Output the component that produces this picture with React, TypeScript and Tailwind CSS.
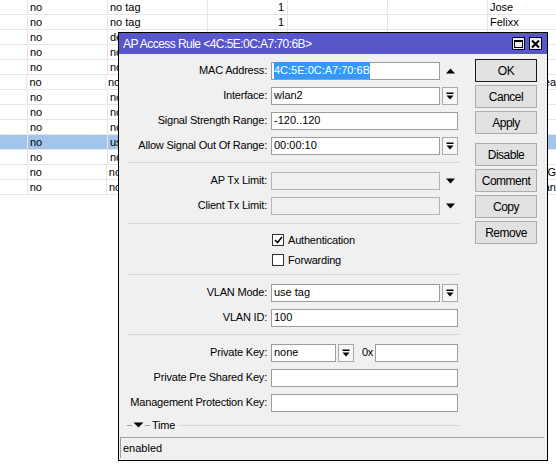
import React from "react";

const tableRows = [
  { c3: "no tag", c4: "1", c7: "Jose" },
  { c3: "no tag", c4: "1", c7: "Felixx" },
  { c3: "default", c4: "", c7: "" },
  { c3: "no tag", c4: "", c7: "" },
  { c3: "no tag", c4: "", c7: "" },
  { c3: "no tag", c4: "", c7: "Reception Area" },
  { c3: "no tag", c4: "", c7: "" },
  { c3: "no tag", c4: "", c7: "" },
  { c3: "no tag", c4: "", c7: "" },
  { c3: "use tag", c4: "", c7: "", selected: true },
  { c3: "no tag", c4: "", c7: "" },
  { c3: "no tag", c4: "", c7: "Conference IG" },
  { c3: "no tag", c4: "", c7: "Reception Lan" },
];

function Table() {
  return (
    <div className="flex flex-col">
      {tableRows.map((r, i) => (
        <div
          key={i}
          className={
            "flex h-[15px] border-b border-[#e6e6e6] leading-[14px] whitespace-nowrap " +
            (r.selected ? "bg-[#a3c5ec]" : "")
          }
        >
          <div className="w-[28px] border-r border-[#e6e6e6]" />
          <div className="w-[80px] border-r border-[#e6e6e6] pl-[2px]">no</div>
          <div className="w-[100px] border-r border-[#e6e6e6] pl-[2px]">{r.c3}</div>
          <div className="w-[80px] border-r border-[#e6e6e6] pr-[3px] text-right">{r.c4}</div>
          <div className="w-[100px] border-r border-[#e6e6e6]" />
          <div className="w-[100px] border-r border-[#e6e6e6]" />
          <div className="flex-1 pl-[2px]">{r.c7}</div>
        </div>
      ))}
    </div>
  );
}

function DropIcon() {
  return (
    <svg width="8" height="8" viewBox="0 0 8 8">
      <rect x="0.5" y="0.5" width="7" height="1.5" fill="#000" />
      <path d="M0.5 3.5H7.5L4 7.5Z" fill="#000" />
    </svg>
  );
}

function DropButton() {
  return (
    <div className="ml-[2px] flex h-[18px] w-[16px] items-center justify-center border border-[#a9a9a9] bg-[#f7f7f7]">
      <DropIcon />
    </div>
  );
}

function Arrow({ up }: { up?: boolean }) {
  return (
    <div className="ml-[2px] flex h-[18px] w-[16px] items-center justify-center">
      <svg width="9" height="6" viewBox="0 0 9 6">
        {up ? <path d="M0 5.5H9L4.5 0.5Z" fill="#000" /> : <path d="M0 0.5H9L4.5 5.5Z" fill="#000" />}
      </svg>
    </div>
  );
}

function Row({ label, children }: { label: string; children: React.ReactNode }) {
  return (
    <div className="flex h-[25px] items-center pl-[8px]">
      <div className="w-[140px] whitespace-nowrap text-right tracking-[-0.2px]">{label}</div>
      <div className="ml-[4px] flex items-center">{children}</div>
    </div>
  );
}

function Sep({ className }: { className: string }) {
  return <div className={"ml-[9px] h-px w-[332px] bg-[#d6d6d6] " + className} />;
}

function Check({ on, label }: { on?: boolean; label: string }) {
  return (
    <div className="flex h-[20px] items-center pl-[153px]">
      <div className="flex h-[12px] w-[12px] items-center justify-center border border-[#333] bg-white">
        {on && (
          <svg width="9" height="8" viewBox="0 0 9 8">
            <path d="M1 4L3.5 6.5L8 1" fill="none" stroke="#000" strokeWidth="1.6" />
          </svg>
        )}
      </div>
      <span className="ml-[4px] tracking-[-0.2px]">{label}</span>
    </div>
  );
}

function Btn({ label, def, className = "" }: { label: string; def?: boolean; className?: string }) {
  return (
    <div
      className={
        "flex h-[23px] w-[62px] items-center justify-center border bg-[#e1e1e1] text-[12px] tracking-[-0.5px] " +
        (def ? "border-[#1a1a1a] " : "border-[#adadad] ") +
        className
      }
    >
      {label}
    </div>
  );
}

const field = "flex h-[18px] items-center border border-[#9c9c9c] bg-white pl-[2px] whitespace-nowrap";
const dis = "h-[18px] border border-[#b4b4b4] bg-[#f0f0f0]";

function Dialog() {
  return (
    <div className="absolute left-[118px] top-[32px] flex h-[429px] w-[430px] flex-col border border-black bg-[#f0f0f0]">
      <div className="flex h-[21px] items-center bg-[#5757c9] pl-[4px] pr-[5px]">
        <span className="text-[12px] tracking-[-0.55px] text-white">AP Access Rule &lt;4C:5E:0C:A7:70:6B&gt;</span>
        <div className="ml-auto flex gap-[4px]">
          <div className="flex h-[13px] w-[13px] items-center justify-center border border-black bg-[#ececf4]">
            <svg width="9" height="8" viewBox="0 0 9 8">
              <rect x="0.5" y="0.5" width="8" height="7" fill="none" stroke="#000" />
              <rect x="0.5" y="0.5" width="8" height="1.5" fill="#000" />
            </svg>
          </div>
          <div className="flex h-[13px] w-[13px] items-center justify-center border border-black bg-[#ececf4]">
            <svg width="9" height="8" viewBox="0 0 9 8">
              <path d="M1 0.5L8 7.5M8 0.5L1 7.5" stroke="#000" strokeWidth="2" />
            </svg>
          </div>
        </div>
      </div>

      <div className="flex">
        <div className="w-[341px] pt-[4px]">
          <Row label="MAC Address:">
            <div className={field + " w-[169px]"}>
              <span className="bg-[#3399ff] text-white">4C:5E:0C:A7:70:6B</span>
            </div>
            <Arrow up />
          </Row>
          <Row label="Interface:">
            <div className={field + " w-[169px]"}>wlan2</div>
            <DropButton />
          </Row>
          <Row label="Signal Strength Range:">
            <div className={field + " w-[187px]"}>-120..120</div>
          </Row>
          <Row label="Allow Signal Out Of Range:">
            <div className={field + " w-[169px]"}>00:00:10</div>
            <DropButton />
          </Row>

          <Sep className="mt-[4px] mb-[5px]" />
          <Row label="AP Tx Limit:">
            <div className={dis + " w-[169px]"} />
            <Arrow />
          </Row>
          <Row label="Client Tx Limit:">
            <div className={dis + " w-[169px]"} />
            <Arrow />
          </Row>

          <Sep className="mt-[5px] mb-[6px]" />
          <Check on label="Authentication" />
          <Check label="Forwarding" />

          <Sep className="mt-[4px] mb-[5px]" />
          <Row label="VLAN Mode:">
            <div className={field + " w-[169px]"}>use tag</div>
            <DropButton />
          </Row>
          <Row label="VLAN ID:">
            <div className={field + " w-[187px]"}>100</div>
          </Row>

          <Sep className="mt-[4px] mb-[5px]" />
          <Row label="Private Key:">
            <div className={field + " w-[65px]"}>none</div>
            <DropButton />
            <span className="ml-[8px] w-[13px] tracking-[-0.3px]">0x</span>
            <div className={field + " w-[83px]"} />
          </Row>
          <Row label="Private Pre Shared Key:">
            <div className={field + " w-[187px]"} />
          </Row>
          <Row label="Management Protection Key:">
            <div className={field + " w-[187px]"} />
          </Row>
          <div className="flex h-[20px] items-center pl-[8px]">
            <div className="h-px w-[5px] bg-[#a0a0a0]" />
            <svg width="11" height="6" viewBox="0 0 11 6" className="mx-[1px]">
              <path d="M0.5 0.5H10.5L5.5 5.5Z" fill="#000" />
            </svg>
            <div className="h-px w-[5px] bg-[#a0a0a0]" />
            <span className="ml-[2px] tracking-[-0.2px]">Time</span>
            <div className="ml-[4px] h-px w-[282px] bg-[#d6d6d6]" />
          </div>
        </div>

        <div className="ml-[15px] flex flex-col gap-[3px] pt-[5px]">
          <Btn label="OK" def />
          <Btn label="Cancel" />
          <Btn label="Apply" />
          <Btn label="Disable" className="mt-[6px]" />
          <Btn label="Comment" />
          <Btn label="Copy" />
          <Btn label="Remove" />
        </div>
      </div>

      <div className="mb-[2px] ml-[1px] mr-[3px] mt-auto flex h-[21px] items-center border-l border-t border-[#a0a0a0] pl-[2px]">
        enabled
      </div>
    </div>
  );
}

export default function App() {
  return (
    <div className="relative h-[468px] w-[556px] overflow-hidden bg-white font-['Liberation_Sans',Arial,sans-serif] text-[11px] text-black">
      <Table />
      <Dialog />
    </div>
  );
}
